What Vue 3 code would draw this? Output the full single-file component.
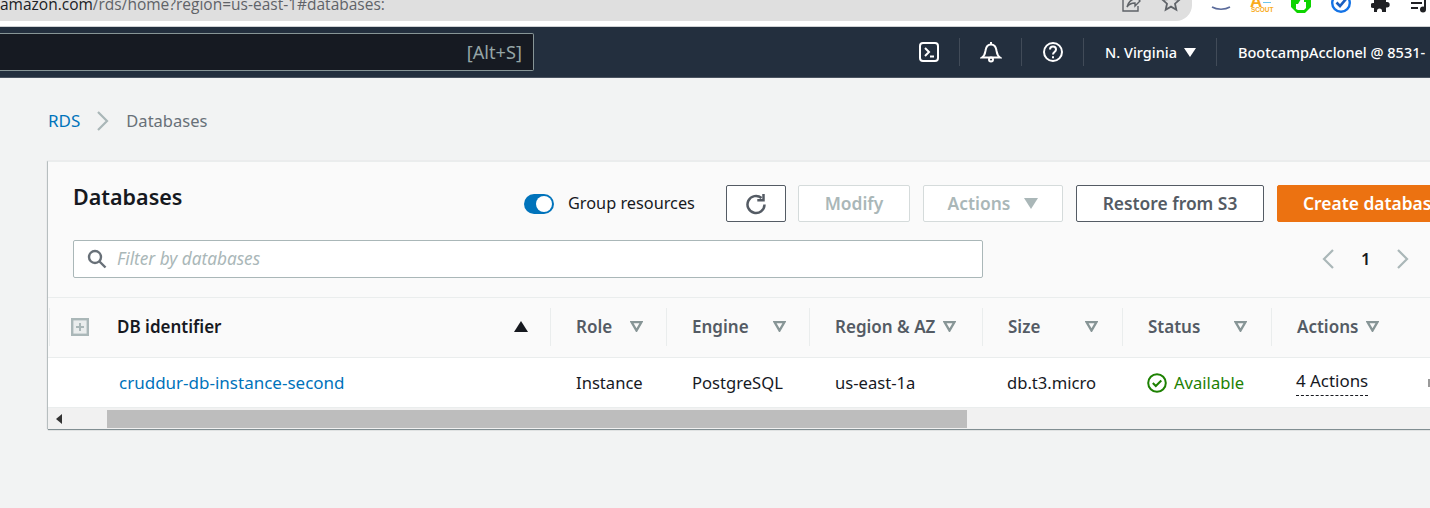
<script setup>
const columns = [
  { label: 'Role', width: 116, gap: 18 },
  { label: 'Engine', width: 143, gap: 24 },
  { label: 'Region & AZ', width: 173, gap: 8 },
  { label: 'Size', width: 140, gap: 45 },
  { label: 'Status', width: 149, gap: 34 },
  { label: 'Actions', width: 132, gap: 8 }
]
const cells = [
  { text: 'Instance', width: 116, pad: 26 },
  { text: 'PostgreSQL', width: 143, pad: 26 },
  { text: 'us-east-1a', width: 173, pad: 26 },
  { text: 'db.t3.micro', width: 140, pad: 25 }
]
const statusWidth = 149
const actionsWidth = 132
</script>

<template>
  <div class="page">
    <div class="chrome">
      <div class="urlbar">
        <div class="url"><span class="host">amazon.com</span>/rds/home?region=us-east-1#databases:</div>
        <div class="url-icons">
          <svg width="22" height="22" viewBox="0 0 22 22" fill="none" stroke="#5f6368" stroke-width="1.4"><path d="M3 5v14h15v-5"/><path d="M7 15c1-5 5-8 8-8V3l5 6-5 5v-3c-3 0-6 1-8 4z"/></svg>
          <svg width="20" height="20" viewBox="0 0 20 20" fill="none" stroke="#5f6368" stroke-width="1.8"><path d="M10 1.5l2.5 5.6 6 .6-4.5 4 1.3 6L10 14.600l-5.300 3.100 1.300-6-4.500-4 6-.6z"/></svg>
        </div>
      </div>
      <div class="extensions">
        <svg class="ext" width="20" height="20" viewBox="0 0 20 20" fill="none" stroke="#5b6b9b" stroke-width="1.500"><path d="M1 7c5 3 13 3 18 0"/></svg>
        <div class="ext scout"><span class="a">A</span><span class="plus"></span><span class="s">SCOUT</span></div>
        <svg class="ext" width="20" height="20" viewBox="0 0 20 20"><path d="M6 -7h8l6 6v8l-6 6H6L0 7V-1z" fill="#0ed400"/><path d="M5 4h2l3-5h3v3h2v6l-2 2H7l-2-1z" fill="#fff"/></svg>
        <svg class="ext" width="20" height="20" viewBox="0 0 20 20" fill="none"><circle cx="10" cy="3" r="8.800" stroke="#1473e6" stroke-width="2.400"/><path d="M5.500 2.500l3.500 3.500 6-7" stroke="#1b5fc0" stroke-width="2.600"/></svg>
        <svg class="ext" width="20" height="20" viewBox="0 0 20 20"><path d="M3 -2h12v4h1a2.700 2.700 0 0 1 0 5.400h-1v4.600H11v-1a2.500 2.500 0 0 0-5 0v1H3V8H2A2.500 2.500 0 0 1 2 3h1z" fill="#202124"/></svg>
        <svg class="ext" width="20" height="20" viewBox="0 0 20 20" fill="#202124"><path d="M0 2h11v2H0zM0 7h7v2H0z"/><circle cx="12" cy="9.500" r="3"/><path d="M13 -1h2v10h-2z"/></svg>
      </div>
    </div>

    <header class="nav">
      <div class="search"><span class="shortcut">[Alt+S]</span></div>
      <div class="nav-right">
        <div class="nav-icon first">
          <svg width="22" height="22" viewBox="0 0 22 22" fill="none" stroke="#fff" stroke-width="2"><rect x="2" y="2" width="18" height="18" rx="3"/><path d="M7 7l4 4-4 4M12 15.500h4"/></svg>
        </div>
        <div class="nav-icon">
          <svg width="22" height="22" viewBox="0 0 22 22" fill="none" stroke="#fff" stroke-width="2"><path d="M2 16.500c3-2 3-4 3.500-7C6 6 8 3.500 11 3.500S16 6 16.500 9.500c.5 3 .5 5 3.500 7z"/><path d="M11 1v2.500"/><circle cx="11" cy="18.500" r="2"/></svg>
        </div>
        <div class="nav-icon">
          <svg width="22" height="22" viewBox="0 0 22 22" fill="none" stroke="#fff" stroke-width="2"><circle cx="11" cy="11" r="9"/><path d="M8 8.500c0-4 6-4 6 0 0 2.500-3 2.500-3 5"/><path d="M11 15.200v2"/></svg>
        </div>
        <div class="region">
          <span>N. Virginia</span>
          <svg width="12" height="9" viewBox="0 0 12 9"><path d="M0 0h12L6 9z" fill="#fff"/></svg>
        </div>
        <div class="account">BootcampAcclonel @ 8531-</div>
      </div>
    </header>

    <main class="content">
      <nav class="crumbs">
        <a class="crumb-link">RDS</a>
        <svg width="16" height="22" viewBox="0 0 16 22" fill="none" stroke="#aab7b8" stroke-width="2.200"><path d="M3 2l9 9-9 9"/></svg>
        <span class="crumb-current">Databases</span>
      </nav>

      <section class="card">
        <div class="toolbar">
          <h1 class="title">Databases</h1>
          <div class="toggle-group">
            <span class="toggle"><span class="knob"></span></span>
            <span class="toggle-label">Group resources</span>
          </div>
          <button class="btn refresh">
            <svg width="22" height="22" viewBox="0 0 22 22" fill="none" stroke="#545b64" stroke-width="2.500"><path d="M16.500 5A8.500 8.500 0 1 0 19.500 11.500"/><path d="M18.500 1v6.200h-6.200"/></svg>
          </button>
          <button class="btn disabled modify"><span class="btn-text">Modify</span></button>
          <button class="btn disabled actions">
            <span class="btn-text">Actions</span>
            <svg width="14" height="11" viewBox="0 0 14 11"><path d="M0 0h14L7 11z" fill="#aab7b8"/></svg>
          </button>
          <button class="btn restore"><span class="btn-text">Restore from S3</span></button>
          <button class="btn primary"><span class="btn-text">Create database</span></button>
        </div>

        <div class="filter-row">
          <div class="filter">
            <svg width="20" height="20" viewBox="0 0 20 20" fill="none" stroke="#687078" stroke-width="2.400"><circle cx="8" cy="8" r="6"/><path d="M12.500 12.500l6 6"/></svg>
            <span class="placeholder">Filter by databases</span>
          </div>
          <div class="pager">
            <svg width="16" height="22" viewBox="0 0 16 22" fill="none" stroke="#aab7b8" stroke-width="2.200"><path d="M13 2l-9 9 9 9"/></svg>
            <span class="page-no">1</span>
            <svg width="16" height="22" viewBox="0 0 16 22" fill="none" stroke="#aab7b8" stroke-width="2.200"><path d="M3 2l9 9-9 9"/></svg>
          </div>
        </div>

        <div class="thead">
          <div class="th-check">
            <svg width="18" height="18" viewBox="0 0 18 18"><rect x="1.200" y="1.200" width="15.600" height="15.600" fill="#eaeded" stroke="#aab7b8" stroke-width="2.400"/><path d="M9 5v8M5 9h8" stroke="#aab7b8" stroke-width="2"/></svg>
          </div>
          <div class="th th-id">
            <span class="th-label strong">DB identifier</span>
            <svg width="14" height="11" viewBox="0 0 14 11"><path d="M0 11h14L7 0z" fill="#16191f"/></svg>
          </div>
          <div v-for="c in columns" :key="c.label" class="th" :style="{ width: c.width + 'px' }">
            <span class="th-label" :style="{ marginRight: c.gap + 'px' }">{{ c.label }}</span>
            <svg width="13" height="11" viewBox="0 0 13 11" fill="none"><path d="M1.500 1h10L6.500 9.500z" stroke="#879596" stroke-width="2.400"/></svg>
          </div>
        </div>

        <div class="tbody">
          <div class="td-check"></div>
          <a class="td td-id">cruddur-db-instance-second</a>
          <div v-for="c in cells" :key="c.text" class="td" :style="{ width: c.width + 'px', paddingLeft: c.pad + 'px' }">{{ c.text }}</div>
          <div class="td status" :style="{ width: statusWidth + 'px' }">
            <svg width="20" height="20" viewBox="0 0 20 20" fill="none" stroke="#1d8102" stroke-width="2"><circle cx="10" cy="10" r="8.800"/><path d="M5.800 10l3 3 5.500-5.500"/></svg>
            Available
          </div>
          <div class="td" :style="{ width: actionsWidth + 'px' }"><span class="dashed">4 Actions</span></div>
          <div class="td"><span class="edge"></span></div>
        </div>

        <div class="scrollbar">
          <svg class="scroll-arrow" width="6" height="10" viewBox="0 0 6 10"><path d="M6 0v10L0 5z" fill="#333"/></svg>
          <div class="thumb"></div>
        </div>
      </section>
    </main>
  </div>
</template>

<style scoped>
.page {
  width: 1430px;
  height: 508px;
  overflow: hidden;
  background: #f2f3f3;
  font-family: "Noto Sans", "Open Sans", sans-serif;
  color: #16191f;
  display: flex;
  flex-direction: column;
}
.chrome {
  height: 27px;
  flex: none;
  box-sizing: border-box;
  background: #fff;
  border-bottom: 1px solid #d0d2d4;
  display: flex;
  overflow: hidden;
}
.urlbar {
  width: 1192px;
  height: 21px;
  flex: none;
  background: #dfdfdf;
  border-bottom-right-radius: 16px;
  display: flex;
  justify-content: space-between;
  overflow: hidden;
}
.url {
  font-family: "Open Sans", sans-serif;
  font-size: 15.500px;
  line-height: 15px;
  color: #5f6368;
  white-space: nowrap;
  margin-top: -3px;
}
.host { color: #202124; }
.url-icons {
  display: flex;
  gap: 19px;
  margin-top: -8px;
  padding-right: 11px;
  align-items: flex-start;
}
.extensions {
  display: flex;
  gap: 20px;
  padding-left: 19px;
  align-items: flex-start;
}
.ext { flex: none; }
.scout {
  width: 20px;
  height: 14px;
  position: relative;
  font-family: "Liberation Sans", sans-serif;
  font-weight: 700;
  color: #f9ab1c;
}
.scout .a { position: absolute; left: -1px; top: -3px; font-size: 17px; line-height: 10px; height: 10px; }
.scout .plus { position: absolute; left: 12px; top: 2px; width: 8px; height: 1px; background: #6cc5ee; }
.scout .s { position: absolute; left: 0; top: 7px; font-size: 6.500px; line-height: 6px; letter-spacing: -0.1px; }
.nav {
  height: 51px;
  flex: none;
  background: #232f3e;
  border-bottom: 1px solid #4a5360;
  box-sizing: border-box;
  display: flex;
  align-items: flex-start;
  overflow: hidden;
}
.search {
  width: 534px;
  height: 38px;
  margin-top: 6px;
  flex: none;
  box-sizing: border-box;
  background: #161a22;
  border: 1px solid #879596;
  border-left: none;
  border-radius: 0 2px 2px 0;
  display: flex;
  justify-content: flex-end;
  align-items: center;
  padding-right: 11px;
}
.shortcut { color: #95a5a6; font-size: 18.200px; }
.nav-right {
  display: flex;
  align-items: center;
  height: 28px;
  margin-top: 11px;
  margin-left: 373px;
  color: #fff;
  white-space: nowrap;
  font-size: 14.500px;
  font-weight: 500;
}
.nav-icon {
  width: 62px;
  height: 28px;
  flex: none;
  display: flex;
  align-items: center;
  padding-left: 20px;
  box-sizing: border-box;
  border-right: 1px solid #414b58;
}
.nav-icon.first { width: 53px; padding-left: 11px; }
.region {
  width: 133px;
  height: 28px;
  flex: none;
  display: flex;
  align-items: center;
  gap: 7px;
  padding-left: 21px;
  box-sizing: border-box;
  border-right: 1px solid #414b58;
}
.account { padding-left: 21px; }
.content {
  flex: 1;
  padding: 0 0 0 48px;
}
.crumbs {
  height: 83px;
  box-sizing: border-box;
  padding-top: 2px;
  display: flex;
  align-items: center;
  gap: 14px;
  font-size: 17px;
  color: #687078;
}
.crumbs svg { margin-left: 1px; margin-right: 1px; }
.crumb-current { font-size: 16.500px; }
.crumb-link { color: #0073bb; }
.card {
  width: 1440px;
  height: 268px;
  background: #fafafa;
  box-shadow: 0 1px 1px 0 rgba(0, 28, 36, 0.45), -1px 0 1px 0 rgba(0, 28, 36, 0.18);
  border-top: 1px solid #eaeded;
  box-sizing: border-box;
}
.toolbar {
  display: flex;
  align-items: center;
  height: 37px;
  margin-top: 23px;
  padding-left: 25px;
}
.title {
  margin: 0;
  width: 451px;
  flex: none;
  font-size: 21.500px;
  font-weight: 600;
  position: relative;
  top: -7px;
}
.toggle-group {
  width: 171px;
  flex: none;
  display: flex;
  align-items: center;
  gap: 14px;
  font-size: 16.300px;
  white-space: nowrap;
}
.toggle-label { margin-top: -2px; }
.toggle {
  width: 30px;
  height: 20px;
  border-radius: 10px;
  background: #0073bb;
  display: block;
  position: relative;
  flex: none;
}
.knob {
  position: absolute;
  right: 2px;
  top: 2px;
  width: 16px;
  height: 16px;
  border-radius: 50%;
  background: #fff;
}
.btn {
  height: 37px;
  box-sizing: border-box;
  border: 1px solid #545b64;
  border-radius: 2px;
  background: #fff;
  font-family: inherit;
  font-size: 17.400px;
  font-weight: 600;
  color: #545b64;
  padding: 0;
  flex: none;
  display: flex;
  align-items: center;
  justify-content: center;
  white-space: nowrap;
}
.btn-text { margin-top: -2px; }
.refresh { width: 60px; margin-left: 31px; }
.modify { width: 112px; margin-left: 12px; }
.actions { width: 140px; margin-left: 13px; gap: 14px; }
.restore { width: 188px; margin-left: 13px; }
.btn.disabled {
  border-color: #d5dbdb;
  color: #aab7b8;
}
.primary {
  width: 170px;
  margin-left: 13px;
  background: #ec7211;
  border-color: #ec7211;
  color: #fff;
  justify-content: flex-start;
  padding-left: 25px;
}
.filter-row {
  display: flex;
  align-items: center;
  margin-top: 18px;
  padding-left: 25px;
}
.filter {
  width: 910px;
  height: 38px;
  box-sizing: border-box;
  flex: none;
  background: #fff;
  border: 1px solid #aab7b8;
  border-radius: 2px;
  display: flex;
  align-items: center;
  gap: 10px;
  padding-left: 13px;
}
.filter svg { flex: none; }
.placeholder {
  font-style: italic;
  font-size: 17.200px;
  color: #aab7b8;
  margin-top: -2px;
}
.pager {
  display: flex;
  align-items: center;
  margin-left: 337px;
  gap: 25px;
}
.page-no { font-weight: 600; font-size: 16.500px; margin-top: -2px; }
.thead {
  margin-top: 19px;
  height: 61px;
  padding-bottom: 2px;
  display: flex;
  align-items: center;
  border-top: 1px solid #eaeded;
  border-bottom: 1px solid #eaeded;
  box-sizing: border-box;
}
.th-check {
  width: 68px;
  flex: none;
  box-sizing: border-box;
  padding-left: 21px;
  display: flex;
  align-items: center;
  height: 38px;
  border-left: 1px solid #eaeded;
  margin-left: 1px;
}
.th {
  height: 38px;
  flex: none;
  box-sizing: border-box;
  display: flex;
  align-items: center;
  padding-left: 26px;
  border-left: 1px solid #eaeded;
  font-size: 17px;
  font-weight: 600;
  color: #545b64;
}
.th-label { margin-left: -1px; }
.th-id {
  width: 433px;
  border-left: none;
  padding-left: 0;
  justify-content: space-between;
  padding-right: 22px;
}
.th-id .th-label { margin-left: 0; }
.th-label.strong { color: #16191f; }
.tbody {
  height: 50px;
  background: #fff;
  display: flex;
  align-items: center;
  font-size: 16.600px;
  border-bottom: 1px solid #eaeded;
  box-sizing: border-box;
}
.td-check { width: 71px; flex: none; }
.td {
  flex: none;
  box-sizing: border-box;
  padding-left: 25px;
  white-space: nowrap;
  display: flex;
  align-items: center;
}
.td-id {
  width: 431px;
  padding-left: 0;
  color: #0073bb;
  font-size: 17px;
}
.status { color: #1d8102; gap: 7px; }
.dashed {
  border-bottom: 1px dashed #16191f;
  line-height: 28px;
  display: block;
  margin-top: -2px;
  font-size: 16.900px;
}
.edge { display: block; width: 3px; height: 8px; background: #999; }
.scrollbar {
  height: 21px;
  background: #f1f1f1;
  display: flex;
  align-items: center;
  position: relative;
}
.scroll-arrow { margin-left: 8px; flex: none; }
.thumb {
  margin-left: 45px;
  width: 860px;
  height: 18px;
  background: #bdbdbd;
}
</style>
